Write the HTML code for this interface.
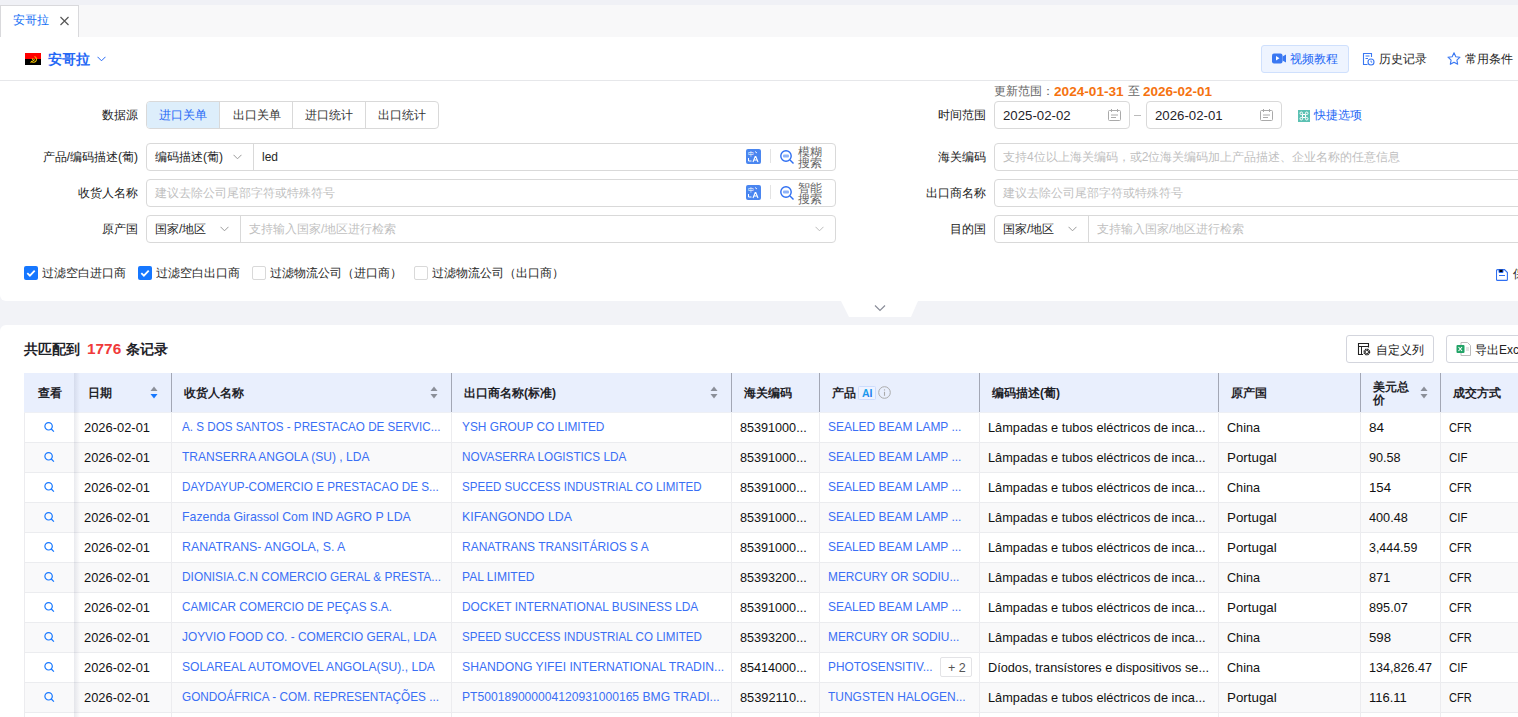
<!DOCTYPE html><html><head><meta charset="utf-8"><style>
*{box-sizing:border-box;margin:0;padding:0}
html,body{width:1518px;height:717px;overflow:hidden}
body{position:relative;background:#f2f3f7;font-family:"Liberation Sans",sans-serif;color:#333;font-size:12px}
.abs{position:absolute}
.t{position:absolute;white-space:nowrap;line-height:1}
.lbl{position:absolute;white-space:nowrap;line-height:1;font-size:12px;color:#222;text-align:right}
.box{position:absolute;border:1px solid #d9d9d9;border-radius:4px;background:#fff}
.ph{color:#bfbfbf}
.hd{position:absolute;white-space:nowrap;line-height:1;font-size:12px;font-weight:bold;color:#1f2329}
.cell{position:absolute;white-space:nowrap;line-height:1;font-size:13px;color:#111}
.lnk{color:#3a6ff5}
</style></head><body>
<div class="abs" style="left:0;top:0;width:1518px;height:5px;background:#f0f1f6"></div>
<div class="abs" style="left:0;top:5px;width:1518px;height:32px;background:#f8f8f9"></div>
<div class="abs" style="left:0;top:5px;width:79px;height:32px;background:#fff;border:1px solid #d9d9dc;border-bottom:none"></div>
<div class="t" style="left:13px;top:14px;font-size:12px;color:#1570f5;">安哥拉</div>
<svg class="abs" style="left:60px;top:16px" width="9" height="10" viewBox="0 0 9 10"><path d="M0.5 1L8.5 9M8.5 1L0.5 9" stroke="#555" stroke-width="1.15"/></svg>
<div class="abs" style="left:0;top:37px;width:1540px;height:264px;background:#fff;border-radius:0 0 6px 6px"></div>
<div class="abs" style="left:0;top:80px;width:1518px;height:1px;background:#e6e7ea"></div>
<svg class="abs" style="left:25px;top:53px" width="16" height="12" viewBox="0 0 16 12"><rect width="16" height="6" fill="#f00"/><rect y="6" width="16" height="6" fill="#000"/><path d="M9.5 3.5a3 3 0 1 1-3.5 4.5" stroke="#f2c200" stroke-width="1.1" fill="none"/><path d="M5.5 9.5l4.5-3" stroke="#f2c200" stroke-width="1"/><path d="M7.6 4.8l.4.9 1-.1-.7.7.3.9-.9-.5-.8.5.2-.9-.7-.7 1 .1z" fill="#f2c200"/></svg>
<div class="t" style="left:48px;top:52px;font-size:14px;font-weight:bold;color:#2568f5;">安哥拉</div>
<svg class="abs" style="left:97px;top:56px" width="9" height="6" viewBox="0 0 9 6"><path d="M0.5 0.8L4.5 4.8L8.5 0.8" stroke="#2568f5" stroke-width="1" fill="none"/></svg>
<div class="abs" style="left:1261px;top:45px;width:88px;height:28px;background:#eef4ff;border:1px solid #cfe0fd;border-radius:3px"></div>
<svg class="abs" style="left:1272px;top:53px" width="14" height="11" viewBox="0 0 14 11"><rect x="0" y="0.5" width="10.5" height="10" rx="2" fill="#3a78f2"/><path d="M10.5 3.5L14 1.5V9.5L10.5 7.5Z" fill="#3a78f2"/><path d="M4 3v4.5l3.5-2.25z" fill="#fff"/></svg>
<div class="t" style="left:1290px;top:53px;font-size:12px;color:#2568f5;">视频教程</div>
<svg class="abs" style="left:1362px;top:52px" width="13" height="14" viewBox="0 0 13 14"><path d="M9.5 5V1.5H1.5v11h4" stroke="#3a78f2" stroke-width="1.1" fill="none"/><path d="M3.5 4h4M3.5 6.5h2.5" stroke="#3a78f2" stroke-width="1"/><circle cx="9" cy="10" r="3" stroke="#3a78f2" stroke-width="1.1" fill="none"/><path d="M9 8.5v1.6h1.2" stroke="#3a78f2" stroke-width="0.9" fill="none"/></svg>
<div class="t" style="left:1379px;top:53px;font-size:12px;color:#262626;">历史记录</div>
<svg class="abs" style="left:1447px;top:52px" width="14" height="13" viewBox="0 0 14 13"><path d="M7 0.8l1.8 3.9 4.2.5-3.1 2.9.8 4.2L7 10.2 3.3 12.3l.8-4.2L1 5.2l4.2-.5z" stroke="#3a78f2" stroke-width="1.1" fill="none" stroke-linejoin="round"/></svg>
<div class="t" style="left:1465px;top:53px;font-size:12px;color:#262626;">常用条件</div>
<div class="t" style="left:994px;top:85px;font-size:12px;color:#666;">更新范围：</div>
<div class="t" id="f1" style="left:1054px;top:85px;font-size:13px;color:#f5720f;font-weight:bold;transform:scaleX(1.0473);transform-origin:0 0;">2024-01-31</div>
<div class="t" style="left:1128px;top:85px;font-size:12px;color:#666;">至</div>
<div class="t" id="f2" style="left:1143px;top:85px;font-size:13px;color:#f5720f;font-weight:bold;transform:scaleX(1.0382);transform-origin:0 0;">2026-02-01</div>
<div class="lbl" style="right:1380px;top:109px">数据源</div>
<div class="box" style="left:146px;top:101px;width:293px;height:28px"></div>
<div class="abs" style="left:147px;top:102px;width:72px;height:26px;background:#ddeefb;border-radius:3px 0 0 3px"></div>
<div class="abs" style="left:219px;top:102px;width:1px;height:26px;background:#d9d9d9"></div>
<div class="abs" style="left:292px;top:102px;width:1px;height:26px;background:#d9d9d9"></div>
<div class="abs" style="left:365px;top:102px;width:1px;height:26px;background:#d9d9d9"></div>
<div class="t" style="left:159px;top:109px;font-size:12px;color:#2568f5;">进口关单</div>
<div class="t" style="left:233px;top:109px;font-size:12px;color:#333;">出口关单</div>
<div class="t" style="left:305px;top:109px;font-size:12px;color:#333;">进口统计</div>
<div class="t" style="left:378px;top:109px;font-size:12px;color:#333;">出口统计</div>
<div class="lbl" style="right:1380px;top:151px">产品/编码描述(葡)</div>
<div class="box" style="left:146px;top:143px;width:690px;height:28px"></div>
<div class="abs" style="left:253px;top:144px;width:1px;height:26px;background:#d9d9d9"></div>
<div class="t" style="left:155px;top:151px;font-size:12px;color:#262626;">编码描述(葡)</div>
<svg class="abs" style="left:233px;top:154px" width="9" height="6" viewBox="0 0 9 6"><path d="M0.5 0.8L4.5 4.8L8.5 0.8" stroke="#999" stroke-width="1" fill="none"/></svg>
<div class="t" style="left:262px;top:151px;font-size:12px;color:#262626;">led</div>
<svg class="abs" style="left:746px;top:149px" width="15" height="15" viewBox="0 0 15 15"><rect width="15" height="15" rx="2" fill="#4a86f0"/><text x="2" y="7" font-size="6" fill="#fff" font-family="Liberation Sans">中</text><path d="M2.5 9v3h3" stroke="#fff" stroke-width="1" fill="none"/><path d="M7 13l2.2-5.5h0.6L12 13M8 11h3" stroke="#fff" stroke-width="1.1" fill="none"/><path d="M9 2.5l2 1.5" stroke="#fff" stroke-width="0.9"/></svg>
<div class="abs" style="left:770px;top:149px;width:1px;height:14px;background:#e3e3e3"></div>
<svg class="abs" style="left:780px;top:150px" width="15" height="14" viewBox="0 0 15 14"><circle cx="6" cy="6" r="5.2" stroke="#2f6ff2" stroke-width="1.4" fill="none"/><rect x="3" y="4.5" width="6" height="3" rx="1" fill="#8fb3f7"/><path d="M10 10l3.5 3.5" stroke="#2f6ff2" stroke-width="1.4"/></svg>
<div class="t" style="left:798px;top:147px;font-size:12px;line-height:11px;color:#666">模糊<br>搜索</div>
<div class="lbl" style="right:1380px;top:187px">收货人名称</div>
<div class="box" style="left:146px;top:179px;width:690px;height:28px"></div>
<div class="t ph" style="left:155px;top:187px;font-size:12px;">建议去除公司尾部字符或特殊符号</div>
<svg class="abs" style="left:746px;top:185px" width="15" height="15" viewBox="0 0 15 15"><rect width="15" height="15" rx="2" fill="#4a86f0"/><text x="2" y="7" font-size="6" fill="#fff" font-family="Liberation Sans">中</text><path d="M2.5 9v3h3" stroke="#fff" stroke-width="1" fill="none"/><path d="M7 13l2.2-5.5h0.6L12 13M8 11h3" stroke="#fff" stroke-width="1.1" fill="none"/><path d="M9 2.5l2 1.5" stroke="#fff" stroke-width="0.9"/></svg>
<div class="abs" style="left:770px;top:185px;width:1px;height:14px;background:#e3e3e3"></div>
<svg class="abs" style="left:780px;top:186px" width="15" height="14" viewBox="0 0 15 14"><circle cx="6" cy="6" r="5.2" stroke="#2f6ff2" stroke-width="1.4" fill="none"/><rect x="3" y="4.5" width="6" height="3" rx="1" fill="#8fb3f7"/><path d="M10 10l3.5 3.5" stroke="#2f6ff2" stroke-width="1.4"/></svg>
<div class="t" style="left:798px;top:183px;font-size:12px;line-height:11px;color:#666">智能<br>搜索</div>
<div class="lbl" style="right:1380px;top:223px">原产国</div>
<div class="box" style="left:146px;top:215px;width:690px;height:28px"></div>
<div class="abs" style="left:240px;top:216px;width:1px;height:26px;background:#d9d9d9"></div>
<div class="t" style="left:155px;top:223px;font-size:12px;color:#262626;">国家/地区</div>
<svg class="abs" style="left:220px;top:226px" width="9" height="6" viewBox="0 0 9 6"><path d="M0.5 0.8L4.5 4.8L8.5 0.8" stroke="#999" stroke-width="1" fill="none"/></svg>
<div class="t ph" style="left:249px;top:223px;font-size:12px;">支持输入国家/地区进行检索</div>
<svg class="abs" style="left:815px;top:226px" width="9" height="6" viewBox="0 0 9 6"><path d="M0.5 0.8L4.5 4.8L8.5 0.8" stroke="#bbb" stroke-width="1" fill="none"/></svg>
<div class="lbl" style="right:532px;top:109px">时间范围</div>
<div class="box" style="left:994px;top:101px;width:136px;height:28px"></div>
<div class="t" id="f3" style="left:1003px;top:109px;font-size:13px;color:#1f2329;transform:scaleX(1.0168);transform-origin:0 0;">2025-02-02</div>
<svg class="abs" style="left:1108px;top:109px" width="13" height="12" viewBox="0 0 13 12"><rect x="0.5" y="1.5" width="12" height="10" rx="1" stroke="#aaa" stroke-width="1" fill="none"/><path d="M3.5 0v3M9.5 0v3M3 6h7M3 8.5h5" stroke="#aaa" stroke-width="1"/></svg>
<div class="abs" style="left:1134px;top:115px;width:7px;height:1px;background:#bbb"></div>
<div class="box" style="left:1146px;top:101px;width:136px;height:28px"></div>
<div class="t" id="f4" style="left:1155px;top:109px;font-size:13px;color:#1f2329;transform:scaleX(1.0168);transform-origin:0 0;">2026-02-01</div>
<svg class="abs" style="left:1260px;top:109px" width="13" height="12" viewBox="0 0 13 12"><rect x="0.5" y="1.5" width="12" height="10" rx="1" stroke="#aaa" stroke-width="1" fill="none"/><path d="M3.5 0v3M9.5 0v3M3 6h7M3 8.5h5" stroke="#aaa" stroke-width="1"/></svg>
<svg class="abs" style="left:1298px;top:110px" width="12" height="12" viewBox="0 0 12 12"><rect width="12" height="12" fill="#5cc1b3"/><path d="M4.5 4.5h3v3h-3z" stroke="#fff" stroke-width="1" fill="none"/><circle cx="3.3" cy="3.3" r="1.3" stroke="#fff" stroke-width="1" fill="none"/><circle cx="8.7" cy="3.3" r="1.3" stroke="#fff" stroke-width="1" fill="none"/><circle cx="3.3" cy="8.7" r="1.3" stroke="#fff" stroke-width="1" fill="none"/><circle cx="8.7" cy="8.7" r="1.3" stroke="#fff" stroke-width="1" fill="none"/></svg>
<div class="t" style="left:1314px;top:109px;font-size:12px;color:#2568f5;">快捷选项</div>
<div class="lbl" style="right:532px;top:151px">海关编码</div>
<div class="box" style="left:994px;top:143px;width:540px;height:28px"></div>
<div class="t ph" id="f5" style="left:1003px;top:151px;font-size:12px;">支持4位以上海关编码，或2位海关编码加上产品描述、企业名称的任意信息</div>
<div class="lbl" style="right:532px;top:187px">出口商名称</div>
<div class="box" style="left:994px;top:179px;width:540px;height:28px"></div>
<div class="t ph" style="left:1003px;top:187px;font-size:12px;">建议去除公司尾部字符或特殊符号</div>
<div class="lbl" style="right:532px;top:223px">目的国</div>
<div class="box" style="left:994px;top:215px;width:540px;height:28px"></div>
<div class="abs" style="left:1088px;top:216px;width:1px;height:26px;background:#d9d9d9"></div>
<div class="t" style="left:1003px;top:223px;font-size:12px;color:#262626;">国家/地区</div>
<svg class="abs" style="left:1068px;top:226px" width="9" height="6" viewBox="0 0 9 6"><path d="M0.5 0.8L4.5 4.8L8.5 0.8" stroke="#999" stroke-width="1" fill="none"/></svg>
<div class="t ph" style="left:1097px;top:223px;font-size:12px;">支持输入国家/地区进行检索</div>
<svg class="abs" style="left:24px;top:266px" width="14" height="14" viewBox="0 0 14 14"><rect width="14" height="14" rx="2" fill="#1677ff"/><path d="M3.3 7.2l2.6 2.5 4.8-5" stroke="#fff" stroke-width="1.8" fill="none"/></svg>
<div class="t" style="left:42px;top:267px;font-size:12px;color:#262626;">过滤空白进口商</div>
<svg class="abs" style="left:138px;top:266px" width="14" height="14" viewBox="0 0 14 14"><rect width="14" height="14" rx="2" fill="#1677ff"/><path d="M3.3 7.2l2.6 2.5 4.8-5" stroke="#fff" stroke-width="1.8" fill="none"/></svg>
<div class="t" style="left:156px;top:267px;font-size:12px;color:#262626;">过滤空白出口商</div>
<div class="abs" style="left:252px;top:266px;width:14px;height:14px;border:1px solid #d9d9d9;border-radius:2px;background:#fff"></div>
<div class="t" style="left:270px;top:267px;font-size:12px;color:#262626;">过滤物流公司（进口商）</div>
<div class="abs" style="left:414px;top:266px;width:14px;height:14px;border:1px solid #d9d9d9;border-radius:2px;background:#fff"></div>
<div class="t" style="left:432px;top:267px;font-size:12px;color:#262626;">过滤物流公司（出口商）</div>
<svg class="abs" style="left:1496px;top:269px" width="12" height="12" viewBox="0 0 12 12"><path d="M1.5 0.6h7l2.9 2.9v6.9a1 1 0 0 1-1 1H1.5a1 1 0 0 1-1-1V1.6a1 1 0 0 1 1-1z" stroke="#2f6ff2" stroke-width="1.1" fill="none"/><path d="M3 0.8v2.7h4V0.8M3 6.5h6" stroke="#2f6ff2" stroke-width="1"/></svg>
<div class="t" style="left:1513px;top:268px;font-size:12px;color:#262626;">保存</div>
<svg class="abs" style="left:841px;top:301px" width="78" height="16" viewBox="0 0 78 16"><path d="M0 0H77L70 16H8Z" fill="#fff"/><path d="M34 4.5L39 9.5L44 4.5" stroke="#8a8d99" stroke-width="1.2" fill="none"/></svg>
<div class="abs" style="left:0;top:325px;width:1540px;height:400px;background:#fff;border-radius:6px 6px 0 0"></div>
<div class="t" style="left:24px;top:342px;font-size:14px;font-weight:bold;color:#1f2329;">共匹配到</div>
<div class="t" id="f6" style="left:87px;top:342px;font-size:14px;font-weight:bold;color:#f03a3a;transform:scaleX(1.0976);transform-origin:0 0;">1776</div>
<div class="t" style="left:126px;top:342px;font-size:14px;font-weight:bold;color:#1f2329;">条记录</div>
<div class="box" style="left:1346px;top:335px;width:88px;height:28px;border-color:#d3d5dd;border-radius:3px"></div>
<svg class="abs" style="left:1357px;top:342px" width="14" height="14" viewBox="0 0 14 14"><path d="M6 12.5H1.5V1.5h10v4" stroke="#222" stroke-width="1.1" fill="none"/><path d="M1.5 4.5h10M4.5 4.5v8" stroke="#222" stroke-width="1"/><circle cx="9.8" cy="10" r="3" fill="#fff"/><circle cx="9.8" cy="10" r="2.6" stroke="#222" stroke-width="1.7" stroke-dasharray="1.4 0.65" fill="none"/><circle cx="9.8" cy="10" r="1.7" stroke="#222" stroke-width="0.9" fill="#fff"/></svg>
<div class="t" style="left:1376px;top:344px;font-size:12px;color:#222;">自定义列</div>
<div class="box" style="left:1446px;top:335px;width:100px;height:28px;border-color:#d3d5dd;border-radius:3px"></div>
<svg class="abs" style="left:1456px;top:342px" width="15" height="14" viewBox="0 0 15 14"><path d="M5 0.5h6.5l3 3v10h-9.5z" stroke="#bbb" stroke-width="1" fill="#fff"/><rect x="0.5" y="3" width="8" height="8" rx="1" fill="#21a366"/><path d="M2.5 5l3.5 4M6 5l-3.5 4" stroke="#fff" stroke-width="1.1"/><path d="M10 6h3M10 8h3" stroke="#bbb" stroke-width="0.8"/></svg>
<div class="t" style="left:1475px;top:344px;font-size:12px;color:#222;">导出Excel</div>
<div class="abs" style="left:24px;top:373px;width:1494px;height:39px;background:#e9effd"></div>
<div class="abs" style="left:24px;top:412px;width:1494px;height:1px;background:#eef0f5"></div>
<div class="abs" style="left:171px;top:373px;width:1px;height:39px;background:#a3a7b5"></div>
<div class="abs" style="left:451px;top:373px;width:1px;height:39px;background:#a3a7b5"></div>
<div class="abs" style="left:731px;top:373px;width:1px;height:39px;background:#a3a7b5"></div>
<div class="abs" style="left:819px;top:373px;width:1px;height:39px;background:#a3a7b5"></div>
<div class="abs" style="left:979px;top:373px;width:1px;height:39px;background:#a3a7b5"></div>
<div class="abs" style="left:1218px;top:373px;width:1px;height:39px;background:#a3a7b5"></div>
<div class="abs" style="left:1360px;top:373px;width:1px;height:39px;background:#a3a7b5"></div>
<div class="abs" style="left:1440px;top:373px;width:1px;height:39px;background:#a3a7b5"></div>
<div class="hd" style="left:38px;top:387px;">查看</div>
<div class="hd" style="left:88px;top:387px;">日期</div>
<div class="hd" style="left:184px;top:387px;">收货人名称</div>
<div class="hd" style="left:464px;top:387px;">出口商名称(标准)</div>
<div class="hd" style="left:744px;top:387px;">海关编码</div>
<div class="hd" style="left:832px;top:387px;">产品</div>
<div class="hd" style="left:992px;top:387px;">编码描述(葡)</div>
<div class="hd" style="left:1231px;top:387px;">原产国</div>
<div class="hd" style="left:1453px;top:387px;">成交方式</div>
<div class="hd" style="left:1373px;top:381px;line-height:13px">美元总<br>价</div>
<svg class="abs" style="left:858px;top:386px" width="18" height="14" viewBox="0 0 18 14"><defs><linearGradient id="aig" x1="0" y1="0" x2="1" y2="1"><stop offset="0" stop-color="#19c6e6"/><stop offset="1" stop-color="#1e5ff5"/></linearGradient></defs><rect x="0.5" y="0.5" width="17" height="13" rx="1" fill="#eef3ff" stroke="#cddcfd" stroke-width="1"/><text x="4" y="11" font-size="10.5" font-weight="bold" fill="url(#aig)" font-family="Liberation Sans">AI</text></svg>
<svg class="abs" style="left:878px;top:386px" width="13" height="13" viewBox="0 0 13 13"><circle cx="6.5" cy="6.5" r="5.8" stroke="#aaa" stroke-width="1" fill="none"/><path d="M6.5 5.8v4" stroke="#aaa" stroke-width="1.1"/><circle cx="6.5" cy="3.9" r="0.7" fill="#aaa"/></svg>
<svg class="abs" style="left:150px;top:386px" width="8" height="13" viewBox="0 0 8 13"><path d="M4 0.5L7.5 5H0.5Z" fill="#8b8f99"/><path d="M4 12.5L7.5 8H0.5Z" fill="#1677ff"/></svg>
<svg class="abs" style="left:430px;top:386px" width="8" height="13" viewBox="0 0 8 13"><path d="M4 0.5L7.5 5H0.5Z" fill="#8b8f99"/><path d="M4 12.5L7.5 8H0.5Z" fill="#8b8f99"/></svg>
<svg class="abs" style="left:710px;top:386px" width="8" height="13" viewBox="0 0 8 13"><path d="M4 0.5L7.5 5H0.5Z" fill="#8b8f99"/><path d="M4 12.5L7.5 8H0.5Z" fill="#8b8f99"/></svg>
<svg class="abs" style="left:1420px;top:386px" width="8" height="13" viewBox="0 0 8 13"><path d="M4 0.5L7.5 5H0.5Z" fill="#8b8f99"/><path d="M4 12.5L7.5 8H0.5Z" fill="#8b8f99"/></svg>
<div class="abs" style="left:24px;top:413px;width:1494px;height:30px;background:#fff;border-bottom:1px solid #ebecef"></div>
<div class="abs" style="left:171px;top:413px;width:1px;height:30px;background:#ececef"></div>
<div class="abs" style="left:451px;top:413px;width:1px;height:30px;background:#ececef"></div>
<div class="abs" style="left:731px;top:413px;width:1px;height:30px;background:#ececef"></div>
<div class="abs" style="left:819px;top:413px;width:1px;height:30px;background:#ececef"></div>
<div class="abs" style="left:979px;top:413px;width:1px;height:30px;background:#ececef"></div>
<div class="abs" style="left:1218px;top:413px;width:1px;height:30px;background:#ececef"></div>
<div class="abs" style="left:1360px;top:413px;width:1px;height:30px;background:#ececef"></div>
<div class="abs" style="left:1440px;top:413px;width:1px;height:30px;background:#ececef"></div>
<svg class="abs" style="left:44px;top:422px" width="11" height="10" viewBox="0 0 11 10"><circle cx="4.6" cy="4.3" r="3.7" stroke="#1677ff" stroke-width="1.2" fill="none"/><path d="M7.3 7l2.6 2.6" stroke="#1677ff" stroke-width="1.2"/></svg>
<div class="cell" id="f7" style="left:84px;top:421px;transform:scaleX(0.9924);transform-origin:0 0;">2026-02-01</div>
<div class="cell lnk" id="f8" style="left:182px;top:420px;transform:scaleX(0.8968);transform-origin:0 0;">A. S DOS SANTOS - PRESTACAO DE SERVIC...</div>
<div class="cell lnk" id="f9" style="left:462px;top:420px;transform:scaleX(0.9141);transform-origin:0 0;">YSH GROUP CO LIMITED</div>
<div class="cell" id="f10" style="left:740px;top:421px;transform:scaleX(0.9706);transform-origin:0 0;">85391000...</div>
<div class="cell lnk" id="f11" style="left:828px;top:420px;transform:scaleX(0.9202);transform-origin:0 0;">SEALED BEAM LAMP ...</div>
<div class="cell" id="f12" style="left:988px;top:421px;transform:scaleX(0.9807);transform-origin:0 0;">Lâmpadas e tubos eléctricos de inca...</div>
<div class="cell" id="f13" style="left:1227px;top:421px;transform:scaleX(0.9706);transform-origin:0 0;">China</div>
<div class="cell" id="f14" style="left:1369px;top:421px;transform:scaleX(1.0394);transform-origin:0 0;">84</div>
<div class="cell" id="f15" style="left:1449px;top:421px;transform:scaleX(0.8476);transform-origin:0 0;">CFR</div>
<div class="abs" style="left:24px;top:443px;width:1494px;height:30px;background:#f9f9fa;border-bottom:1px solid #ebecef"></div>
<div class="abs" style="left:171px;top:443px;width:1px;height:30px;background:#ececef"></div>
<div class="abs" style="left:451px;top:443px;width:1px;height:30px;background:#ececef"></div>
<div class="abs" style="left:731px;top:443px;width:1px;height:30px;background:#ececef"></div>
<div class="abs" style="left:819px;top:443px;width:1px;height:30px;background:#ececef"></div>
<div class="abs" style="left:979px;top:443px;width:1px;height:30px;background:#ececef"></div>
<div class="abs" style="left:1218px;top:443px;width:1px;height:30px;background:#ececef"></div>
<div class="abs" style="left:1360px;top:443px;width:1px;height:30px;background:#ececef"></div>
<div class="abs" style="left:1440px;top:443px;width:1px;height:30px;background:#ececef"></div>
<svg class="abs" style="left:44px;top:452px" width="11" height="10" viewBox="0 0 11 10"><circle cx="4.6" cy="4.3" r="3.7" stroke="#1677ff" stroke-width="1.2" fill="none"/><path d="M7.3 7l2.6 2.6" stroke="#1677ff" stroke-width="1.2"/></svg>
<div class="cell" id="f16" style="left:84px;top:451px;transform:scaleX(0.9924);transform-origin:0 0;">2026-02-01</div>
<div class="cell lnk" id="f17" style="left:182px;top:450px;transform:scaleX(0.9266);transform-origin:0 0;">TRANSERRA ANGOLA (SU) , LDA</div>
<div class="cell lnk" id="f18" style="left:462px;top:450px;transform:scaleX(0.9037);transform-origin:0 0;">NOVASERRA LOGISTICS LDA</div>
<div class="cell" id="f19" style="left:740px;top:451px;transform:scaleX(0.9706);transform-origin:0 0;">85391000...</div>
<div class="cell lnk" id="f20" style="left:828px;top:450px;transform:scaleX(0.9202);transform-origin:0 0;">SEALED BEAM LAMP ...</div>
<div class="cell" id="f21" style="left:988px;top:451px;transform:scaleX(0.9807);transform-origin:0 0;">Lâmpadas e tubos eléctricos de inca...</div>
<div class="cell" id="f22" style="left:1227px;top:451px;transform:scaleX(1.027);transform-origin:0 0;">Portugal</div>
<div class="cell" id="f23" style="left:1369px;top:451px;transform:scaleX(0.9732);transform-origin:0 0;">90.58</div>
<div class="cell" id="f24" style="left:1449px;top:451px;transform:scaleX(0.8821);transform-origin:0 0;">CIF</div>
<div class="abs" style="left:24px;top:473px;width:1494px;height:30px;background:#fff;border-bottom:1px solid #ebecef"></div>
<div class="abs" style="left:171px;top:473px;width:1px;height:30px;background:#ececef"></div>
<div class="abs" style="left:451px;top:473px;width:1px;height:30px;background:#ececef"></div>
<div class="abs" style="left:731px;top:473px;width:1px;height:30px;background:#ececef"></div>
<div class="abs" style="left:819px;top:473px;width:1px;height:30px;background:#ececef"></div>
<div class="abs" style="left:979px;top:473px;width:1px;height:30px;background:#ececef"></div>
<div class="abs" style="left:1218px;top:473px;width:1px;height:30px;background:#ececef"></div>
<div class="abs" style="left:1360px;top:473px;width:1px;height:30px;background:#ececef"></div>
<div class="abs" style="left:1440px;top:473px;width:1px;height:30px;background:#ececef"></div>
<svg class="abs" style="left:44px;top:482px" width="11" height="10" viewBox="0 0 11 10"><circle cx="4.6" cy="4.3" r="3.7" stroke="#1677ff" stroke-width="1.2" fill="none"/><path d="M7.3 7l2.6 2.6" stroke="#1677ff" stroke-width="1.2"/></svg>
<div class="cell" id="f25" style="left:84px;top:481px;transform:scaleX(0.9924);transform-origin:0 0;">2026-02-01</div>
<div class="cell lnk" id="f26" style="left:182px;top:480px;transform:scaleX(0.9);transform-origin:0 0;">DAYDAYUP-COMERCIO E PRESTACAO DE S...</div>
<div class="cell lnk" id="f27" style="left:462px;top:480px;transform:scaleX(0.8911);transform-origin:0 0;">SPEED SUCCESS INDUSTRIAL CO LIMITED</div>
<div class="cell" id="f28" style="left:740px;top:481px;transform:scaleX(0.9706);transform-origin:0 0;">85391000...</div>
<div class="cell lnk" id="f29" style="left:828px;top:480px;transform:scaleX(0.9202);transform-origin:0 0;">SEALED BEAM LAMP ...</div>
<div class="cell" id="f30" style="left:988px;top:481px;transform:scaleX(0.9807);transform-origin:0 0;">Lâmpadas e tubos eléctricos de inca...</div>
<div class="cell" id="f31" style="left:1227px;top:481px;transform:scaleX(0.9706);transform-origin:0 0;">China</div>
<div class="cell" id="f32" style="left:1369px;top:481px;transform:scaleX(1.0143);transform-origin:0 0;">154</div>
<div class="cell" id="f33" style="left:1449px;top:481px;transform:scaleX(0.8476);transform-origin:0 0;">CFR</div>
<div class="abs" style="left:24px;top:503px;width:1494px;height:30px;background:#f9f9fa;border-bottom:1px solid #ebecef"></div>
<div class="abs" style="left:171px;top:503px;width:1px;height:30px;background:#ececef"></div>
<div class="abs" style="left:451px;top:503px;width:1px;height:30px;background:#ececef"></div>
<div class="abs" style="left:731px;top:503px;width:1px;height:30px;background:#ececef"></div>
<div class="abs" style="left:819px;top:503px;width:1px;height:30px;background:#ececef"></div>
<div class="abs" style="left:979px;top:503px;width:1px;height:30px;background:#ececef"></div>
<div class="abs" style="left:1218px;top:503px;width:1px;height:30px;background:#ececef"></div>
<div class="abs" style="left:1360px;top:503px;width:1px;height:30px;background:#ececef"></div>
<div class="abs" style="left:1440px;top:503px;width:1px;height:30px;background:#ececef"></div>
<svg class="abs" style="left:44px;top:512px" width="11" height="10" viewBox="0 0 11 10"><circle cx="4.6" cy="4.3" r="3.7" stroke="#1677ff" stroke-width="1.2" fill="none"/><path d="M7.3 7l2.6 2.6" stroke="#1677ff" stroke-width="1.2"/></svg>
<div class="cell" id="f34" style="left:84px;top:511px;transform:scaleX(0.9924);transform-origin:0 0;">2026-02-01</div>
<div class="cell lnk" id="f35" style="left:182px;top:510px;transform:scaleX(0.9493);transform-origin:0 0;">Fazenda Girassol Com IND AGRO P LDA</div>
<div class="cell lnk" id="f36" style="left:462px;top:510px;transform:scaleX(0.9513);transform-origin:0 0;">KIFANGONDO LDA</div>
<div class="cell" id="f37" style="left:740px;top:511px;transform:scaleX(0.9706);transform-origin:0 0;">85391000...</div>
<div class="cell lnk" id="f38" style="left:828px;top:510px;transform:scaleX(0.9202);transform-origin:0 0;">SEALED BEAM LAMP ...</div>
<div class="cell" id="f39" style="left:988px;top:511px;transform:scaleX(0.9807);transform-origin:0 0;">Lâmpadas e tubos eléctricos de inca...</div>
<div class="cell" id="f40" style="left:1227px;top:511px;transform:scaleX(1.027);transform-origin:0 0;">Portugal</div>
<div class="cell" id="f41" style="left:1369px;top:511px;transform:scaleX(0.9751);transform-origin:0 0;">400.48</div>
<div class="cell" id="f42" style="left:1449px;top:511px;transform:scaleX(0.8821);transform-origin:0 0;">CIF</div>
<div class="abs" style="left:24px;top:533px;width:1494px;height:30px;background:#fff;border-bottom:1px solid #ebecef"></div>
<div class="abs" style="left:171px;top:533px;width:1px;height:30px;background:#ececef"></div>
<div class="abs" style="left:451px;top:533px;width:1px;height:30px;background:#ececef"></div>
<div class="abs" style="left:731px;top:533px;width:1px;height:30px;background:#ececef"></div>
<div class="abs" style="left:819px;top:533px;width:1px;height:30px;background:#ececef"></div>
<div class="abs" style="left:979px;top:533px;width:1px;height:30px;background:#ececef"></div>
<div class="abs" style="left:1218px;top:533px;width:1px;height:30px;background:#ececef"></div>
<div class="abs" style="left:1360px;top:533px;width:1px;height:30px;background:#ececef"></div>
<div class="abs" style="left:1440px;top:533px;width:1px;height:30px;background:#ececef"></div>
<svg class="abs" style="left:44px;top:542px" width="11" height="10" viewBox="0 0 11 10"><circle cx="4.6" cy="4.3" r="3.7" stroke="#1677ff" stroke-width="1.2" fill="none"/><path d="M7.3 7l2.6 2.6" stroke="#1677ff" stroke-width="1.2"/></svg>
<div class="cell" id="f43" style="left:84px;top:541px;transform:scaleX(0.9924);transform-origin:0 0;">2026-02-01</div>
<div class="cell lnk" id="f44" style="left:182px;top:540px;transform:scaleX(0.9514);transform-origin:0 0;">RANATRANS- ANGOLA, S. A</div>
<div class="cell lnk" id="f45" style="left:462px;top:540px;transform:scaleX(0.922);transform-origin:0 0;">RANATRANS TRANSITÁRIOS S A</div>
<div class="cell" id="f46" style="left:740px;top:541px;transform:scaleX(0.9706);transform-origin:0 0;">85391000...</div>
<div class="cell lnk" id="f47" style="left:828px;top:540px;transform:scaleX(0.9202);transform-origin:0 0;">SEALED BEAM LAMP ...</div>
<div class="cell" id="f48" style="left:988px;top:541px;transform:scaleX(0.9807);transform-origin:0 0;">Lâmpadas e tubos eléctricos de inca...</div>
<div class="cell" id="f49" style="left:1227px;top:541px;transform:scaleX(1.027);transform-origin:0 0;">Portugal</div>
<div class="cell" id="f50" style="left:1369px;top:541px;transform:scaleX(0.9555);transform-origin:0 0;">3,444.59</div>
<div class="cell" id="f51" style="left:1449px;top:541px;transform:scaleX(0.8476);transform-origin:0 0;">CFR</div>
<div class="abs" style="left:24px;top:563px;width:1494px;height:30px;background:#f9f9fa;border-bottom:1px solid #ebecef"></div>
<div class="abs" style="left:171px;top:563px;width:1px;height:30px;background:#ececef"></div>
<div class="abs" style="left:451px;top:563px;width:1px;height:30px;background:#ececef"></div>
<div class="abs" style="left:731px;top:563px;width:1px;height:30px;background:#ececef"></div>
<div class="abs" style="left:819px;top:563px;width:1px;height:30px;background:#ececef"></div>
<div class="abs" style="left:979px;top:563px;width:1px;height:30px;background:#ececef"></div>
<div class="abs" style="left:1218px;top:563px;width:1px;height:30px;background:#ececef"></div>
<div class="abs" style="left:1360px;top:563px;width:1px;height:30px;background:#ececef"></div>
<div class="abs" style="left:1440px;top:563px;width:1px;height:30px;background:#ececef"></div>
<svg class="abs" style="left:44px;top:572px" width="11" height="10" viewBox="0 0 11 10"><circle cx="4.6" cy="4.3" r="3.7" stroke="#1677ff" stroke-width="1.2" fill="none"/><path d="M7.3 7l2.6 2.6" stroke="#1677ff" stroke-width="1.2"/></svg>
<div class="cell" id="f52" style="left:84px;top:571px;transform:scaleX(0.9924);transform-origin:0 0;">2026-02-01</div>
<div class="cell lnk" id="f53" style="left:182px;top:570px;transform:scaleX(0.9151);transform-origin:0 0;">DIONISIA.C.N COMERCIO GERAL &amp; PRESTA...</div>
<div class="cell lnk" id="f54" style="left:462px;top:570px;transform:scaleX(0.9295);transform-origin:0 0;">PAL LIMITED</div>
<div class="cell" id="f55" style="left:740px;top:571px;transform:scaleX(0.9706);transform-origin:0 0;">85393200...</div>
<div class="cell lnk" id="f56" style="left:828px;top:570px;transform:scaleX(0.912);transform-origin:0 0;">MERCURY OR SODIU...</div>
<div class="cell" id="f57" style="left:988px;top:571px;transform:scaleX(0.9807);transform-origin:0 0;">Lâmpadas e tubos eléctricos de inca...</div>
<div class="cell" id="f58" style="left:1227px;top:571px;transform:scaleX(0.9706);transform-origin:0 0;">China</div>
<div class="cell" id="f59" style="left:1369px;top:571px;transform:scaleX(0.9805);transform-origin:0 0;">871</div>
<div class="cell" id="f60" style="left:1449px;top:571px;transform:scaleX(0.8476);transform-origin:0 0;">CFR</div>
<div class="abs" style="left:24px;top:593px;width:1494px;height:30px;background:#fff;border-bottom:1px solid #ebecef"></div>
<div class="abs" style="left:171px;top:593px;width:1px;height:30px;background:#ececef"></div>
<div class="abs" style="left:451px;top:593px;width:1px;height:30px;background:#ececef"></div>
<div class="abs" style="left:731px;top:593px;width:1px;height:30px;background:#ececef"></div>
<div class="abs" style="left:819px;top:593px;width:1px;height:30px;background:#ececef"></div>
<div class="abs" style="left:979px;top:593px;width:1px;height:30px;background:#ececef"></div>
<div class="abs" style="left:1218px;top:593px;width:1px;height:30px;background:#ececef"></div>
<div class="abs" style="left:1360px;top:593px;width:1px;height:30px;background:#ececef"></div>
<div class="abs" style="left:1440px;top:593px;width:1px;height:30px;background:#ececef"></div>
<svg class="abs" style="left:44px;top:602px" width="11" height="10" viewBox="0 0 11 10"><circle cx="4.6" cy="4.3" r="3.7" stroke="#1677ff" stroke-width="1.2" fill="none"/><path d="M7.3 7l2.6 2.6" stroke="#1677ff" stroke-width="1.2"/></svg>
<div class="cell" id="f61" style="left:84px;top:601px;transform:scaleX(0.9924);transform-origin:0 0;">2026-02-01</div>
<div class="cell lnk" id="f62" style="left:182px;top:600px;transform:scaleX(0.9024);transform-origin:0 0;">CAMICAR COMERCIO DE PEÇAS S.A.</div>
<div class="cell lnk" id="f63" style="left:462px;top:600px;transform:scaleX(0.9146);transform-origin:0 0;">DOCKET INTERNATIONAL BUSINESS LDA</div>
<div class="cell" id="f64" style="left:740px;top:601px;transform:scaleX(0.9706);transform-origin:0 0;">85391000...</div>
<div class="cell lnk" id="f65" style="left:828px;top:600px;transform:scaleX(0.9202);transform-origin:0 0;">SEALED BEAM LAMP ...</div>
<div class="cell" id="f66" style="left:988px;top:601px;transform:scaleX(0.9807);transform-origin:0 0;">Lâmpadas e tubos eléctricos de inca...</div>
<div class="cell" id="f67" style="left:1227px;top:601px;transform:scaleX(1.027);transform-origin:0 0;">Portugal</div>
<div class="cell" id="f68" style="left:1369px;top:601px;transform:scaleX(0.9751);transform-origin:0 0;">895.07</div>
<div class="cell" id="f69" style="left:1449px;top:601px;transform:scaleX(0.8476);transform-origin:0 0;">CFR</div>
<div class="abs" style="left:24px;top:623px;width:1494px;height:30px;background:#f9f9fa;border-bottom:1px solid #ebecef"></div>
<div class="abs" style="left:171px;top:623px;width:1px;height:30px;background:#ececef"></div>
<div class="abs" style="left:451px;top:623px;width:1px;height:30px;background:#ececef"></div>
<div class="abs" style="left:731px;top:623px;width:1px;height:30px;background:#ececef"></div>
<div class="abs" style="left:819px;top:623px;width:1px;height:30px;background:#ececef"></div>
<div class="abs" style="left:979px;top:623px;width:1px;height:30px;background:#ececef"></div>
<div class="abs" style="left:1218px;top:623px;width:1px;height:30px;background:#ececef"></div>
<div class="abs" style="left:1360px;top:623px;width:1px;height:30px;background:#ececef"></div>
<div class="abs" style="left:1440px;top:623px;width:1px;height:30px;background:#ececef"></div>
<svg class="abs" style="left:44px;top:632px" width="11" height="10" viewBox="0 0 11 10"><circle cx="4.6" cy="4.3" r="3.7" stroke="#1677ff" stroke-width="1.2" fill="none"/><path d="M7.3 7l2.6 2.6" stroke="#1677ff" stroke-width="1.2"/></svg>
<div class="cell" id="f70" style="left:84px;top:631px;transform:scaleX(0.9924);transform-origin:0 0;">2026-02-01</div>
<div class="cell lnk" id="f71" style="left:182px;top:630px;transform:scaleX(0.9121);transform-origin:0 0;">JOYVIO FOOD CO. - COMERCIO GERAL, LDA</div>
<div class="cell lnk" id="f72" style="left:462px;top:630px;transform:scaleX(0.8919);transform-origin:0 0;">SPEED SUCCESS INDUSTRIAL CO LIMITED</div>
<div class="cell" id="f73" style="left:740px;top:631px;transform:scaleX(0.9706);transform-origin:0 0;">85393200...</div>
<div class="cell lnk" id="f74" style="left:828px;top:630px;transform:scaleX(0.912);transform-origin:0 0;">MERCURY OR SODIU...</div>
<div class="cell" id="f75" style="left:988px;top:631px;transform:scaleX(0.9807);transform-origin:0 0;">Lâmpadas e tubos eléctricos de inca...</div>
<div class="cell" id="f76" style="left:1227px;top:631px;transform:scaleX(0.9706);transform-origin:0 0;">China</div>
<div class="cell" id="f77" style="left:1369px;top:631px;transform:scaleX(1.0143);transform-origin:0 0;">598</div>
<div class="cell" id="f78" style="left:1449px;top:631px;transform:scaleX(0.8476);transform-origin:0 0;">CFR</div>
<div class="abs" style="left:24px;top:653px;width:1494px;height:30px;background:#fff;border-bottom:1px solid #ebecef"></div>
<div class="abs" style="left:171px;top:653px;width:1px;height:30px;background:#ececef"></div>
<div class="abs" style="left:451px;top:653px;width:1px;height:30px;background:#ececef"></div>
<div class="abs" style="left:731px;top:653px;width:1px;height:30px;background:#ececef"></div>
<div class="abs" style="left:819px;top:653px;width:1px;height:30px;background:#ececef"></div>
<div class="abs" style="left:979px;top:653px;width:1px;height:30px;background:#ececef"></div>
<div class="abs" style="left:1218px;top:653px;width:1px;height:30px;background:#ececef"></div>
<div class="abs" style="left:1360px;top:653px;width:1px;height:30px;background:#ececef"></div>
<div class="abs" style="left:1440px;top:653px;width:1px;height:30px;background:#ececef"></div>
<svg class="abs" style="left:44px;top:662px" width="11" height="10" viewBox="0 0 11 10"><circle cx="4.6" cy="4.3" r="3.7" stroke="#1677ff" stroke-width="1.2" fill="none"/><path d="M7.3 7l2.6 2.6" stroke="#1677ff" stroke-width="1.2"/></svg>
<div class="cell" id="f79" style="left:84px;top:661px;transform:scaleX(0.9924);transform-origin:0 0;">2026-02-01</div>
<div class="cell lnk" id="f80" style="left:182px;top:660px;transform:scaleX(0.9303);transform-origin:0 0;">SOLAREAL AUTOMOVEL ANGOLA(SU)., LDA</div>
<div class="cell lnk" id="f81" style="left:462px;top:660px;transform:scaleX(0.9373);transform-origin:0 0;">SHANDONG YIFEI INTERNATIONAL TRADIN...</div>
<div class="cell" id="f82" style="left:740px;top:661px;transform:scaleX(0.9706);transform-origin:0 0;">85414000...</div>
<div class="cell lnk" id="f83" style="left:828px;top:660px;transform:scaleX(0.9106);transform-origin:0 0;">PHOTOSENSITIV...</div>
<div class="cell" id="f84" style="left:988px;top:661px;transform:scaleX(0.9771);transform-origin:0 0;">Díodos, transístores e dispositivos se...</div>
<div class="cell" id="f85" style="left:1227px;top:661px;transform:scaleX(0.9706);transform-origin:0 0;">China</div>
<div class="cell" id="f86" style="left:1369px;top:661px;transform:scaleX(0.9676);transform-origin:0 0;">134,826.47</div>
<div class="cell" id="f87" style="left:1449px;top:661px;transform:scaleX(0.8821);transform-origin:0 0;">CIF</div>
<div class="abs" style="left:940px;top:657px;width:32px;height:20px;border:1px solid #e3e3e6;border-radius:2px;background:#fff"></div>
<div class="t" id="f88" style="left:948px;top:662px;font-size:12px;color:#555;transform:scaleX(1.0427);transform-origin:0 0;">+ 2</div>
<div class="abs" style="left:24px;top:683px;width:1494px;height:30px;background:#f9f9fa;border-bottom:1px solid #ebecef"></div>
<div class="abs" style="left:171px;top:683px;width:1px;height:30px;background:#ececef"></div>
<div class="abs" style="left:451px;top:683px;width:1px;height:30px;background:#ececef"></div>
<div class="abs" style="left:731px;top:683px;width:1px;height:30px;background:#ececef"></div>
<div class="abs" style="left:819px;top:683px;width:1px;height:30px;background:#ececef"></div>
<div class="abs" style="left:979px;top:683px;width:1px;height:30px;background:#ececef"></div>
<div class="abs" style="left:1218px;top:683px;width:1px;height:30px;background:#ececef"></div>
<div class="abs" style="left:1360px;top:683px;width:1px;height:30px;background:#ececef"></div>
<div class="abs" style="left:1440px;top:683px;width:1px;height:30px;background:#ececef"></div>
<svg class="abs" style="left:44px;top:692px" width="11" height="10" viewBox="0 0 11 10"><circle cx="4.6" cy="4.3" r="3.7" stroke="#1677ff" stroke-width="1.2" fill="none"/><path d="M7.3 7l2.6 2.6" stroke="#1677ff" stroke-width="1.2"/></svg>
<div class="cell" id="f89" style="left:84px;top:691px;transform:scaleX(0.9924);transform-origin:0 0;">2026-02-01</div>
<div class="cell lnk" id="f90" style="left:182px;top:690px;transform:scaleX(0.9061);transform-origin:0 0;">GONDOÁFRICA - COM. REPRESENTAÇÕES ...</div>
<div class="cell lnk" id="f91" style="left:462px;top:690px;transform:scaleX(0.9315);transform-origin:0 0;">PT500189000004120931000165 BMG TRADI...</div>
<div class="cell" id="f92" style="left:740px;top:691px;transform:scaleX(0.9847);transform-origin:0 0;">85392110...</div>
<div class="cell lnk" id="f93" style="left:828px;top:690px;transform:scaleX(0.9203);transform-origin:0 0;">TUNGSTEN HALOGEN...</div>
<div class="cell" id="f94" style="left:988px;top:691px;transform:scaleX(0.9807);transform-origin:0 0;">Lâmpadas e tubos eléctricos de inca...</div>
<div class="cell" id="f95" style="left:1227px;top:691px;transform:scaleX(1.027);transform-origin:0 0;">Portugal</div>
<div class="cell" id="f96" style="left:1369px;top:691px;">116.11</div>
<div class="cell" id="f97" style="left:1449px;top:691px;transform:scaleX(0.8476);transform-origin:0 0;">CFR</div>
<div class="abs" style="left:24px;top:713px;width:1494px;height:30px;background:#fff;border-bottom:1px solid #ebecef"></div>
<div class="abs" style="left:171px;top:713px;width:1px;height:30px;background:#ececef"></div>
<div class="abs" style="left:451px;top:713px;width:1px;height:30px;background:#ececef"></div>
<div class="abs" style="left:731px;top:713px;width:1px;height:30px;background:#ececef"></div>
<div class="abs" style="left:819px;top:713px;width:1px;height:30px;background:#ececef"></div>
<div class="abs" style="left:979px;top:713px;width:1px;height:30px;background:#ececef"></div>
<div class="abs" style="left:1218px;top:713px;width:1px;height:30px;background:#ececef"></div>
<div class="abs" style="left:1360px;top:713px;width:1px;height:30px;background:#ececef"></div>
<div class="abs" style="left:1440px;top:713px;width:1px;height:30px;background:#ececef"></div>
<div class="abs" style="left:74px;top:373px;width:6px;height:344px;background:linear-gradient(to right, rgba(40,50,90,0.1), rgba(40,50,90,0))"></div>
<div class="abs" style="left:24px;top:413px;width:1px;height:304px;background:#ececef"></div>
</body></html>
